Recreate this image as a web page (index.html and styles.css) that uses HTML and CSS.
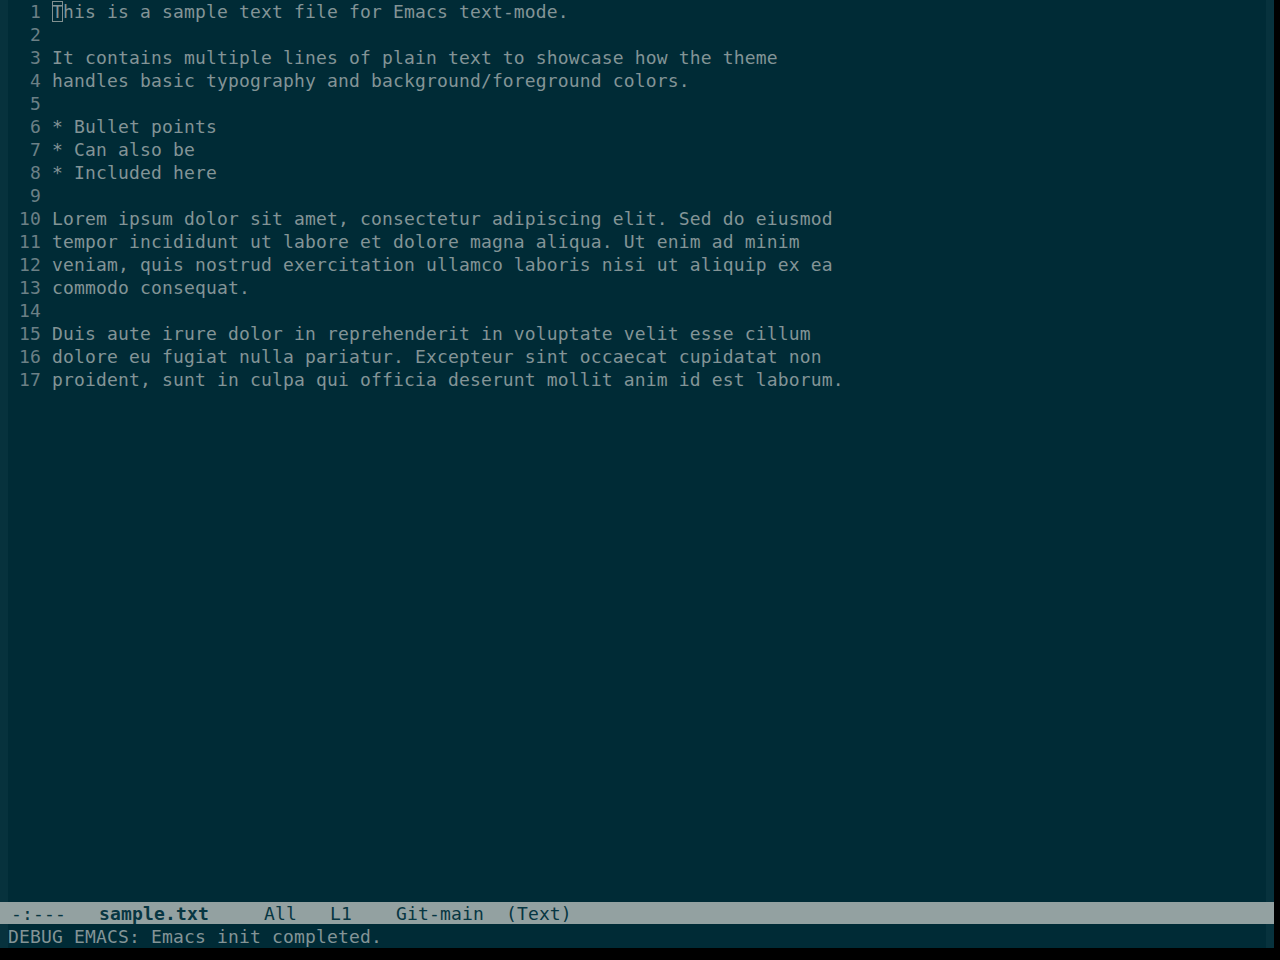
FILE: index.html
```html
<!DOCTYPE html>
<html>
<head>
<meta charset="utf-8">
<link rel="stylesheet" href="styles.css">
</head>
<body>
<div class="frame">
  <div class="window">
    <div class="fringe"></div>
    <div class="text-area">
      <div class="row"><span class="ln">  1 </span><span class="cursor">T</span>his is a sample text file for Emacs text-mode.</div>
      <div class="row"><span class="ln">  2 </span></div>
      <div class="row"><span class="ln">  3 </span>It contains multiple lines of plain text to showcase how the theme</div>
      <div class="row"><span class="ln">  4 </span>handles basic typography and background/foreground colors.</div>
      <div class="row"><span class="ln">  5 </span></div>
      <div class="row"><span class="ln">  6 </span>* Bullet points</div>
      <div class="row"><span class="ln">  7 </span>* Can also be</div>
      <div class="row"><span class="ln">  8 </span>* Included here</div>
      <div class="row"><span class="ln">  9 </span></div>
      <div class="row"><span class="ln"> 10 </span>Lorem ipsum dolor sit amet, consectetur adipiscing elit. Sed do eiusmod</div>
      <div class="row"><span class="ln"> 11 </span>tempor incididunt ut labore et dolore magna aliqua. Ut enim ad minim</div>
      <div class="row"><span class="ln"> 12 </span>veniam, quis nostrud exercitation ullamco laboris nisi ut aliquip ex ea</div>
      <div class="row"><span class="ln"> 13 </span>commodo consequat.</div>
      <div class="row"><span class="ln"> 14 </span></div>
      <div class="row"><span class="ln"> 15 </span>Duis aute irure dolor in reprehenderit in voluptate velit esse cillum</div>
      <div class="row"><span class="ln"> 16 </span>dolore eu fugiat nulla pariatur. Excepteur sint occaecat cupidatat non</div>
      <div class="row"><span class="ln"> 17 </span>proident, sunt in culpa qui officia deserunt mollit anim id est laborum.</div>
    </div>
    <div class="fringe"></div>
  </div>
  <div class="mode-line"> -:---   <span class="buf">sample.txt</span>     All   L1    Git-main  (Text)</div>
  <div class="echo">
    <div class="fringe"></div>
    <div class="echo-text">DEBUG EMACS: Emacs init completed.</div>
    <div class="fringe"></div>
  </div>
</div>
</body>
</html>
```
FILE: styles.css
```css
html, body {
  margin: 0;
  padding: 0;
  background: #000000;
}
.frame {
  width: 1274px;
  height: 948px;
  display: flex;
  flex-direction: column;
  font-family: "DejaVu Sans Mono", monospace;
  font-size: 18px;
  letter-spacing: 0.16px;
  color: #839496;
}
.window {
  height: 902px;
  display: flex;
  background: #002b36;
}
.fringe {
  width: 8px;
  flex: none;
  background: #07323d;
}
.text-area {
  flex: 1;
  overflow: hidden;
}
.row {
  box-sizing: border-box;
  height: 23px;
  padding-top: 1px;
  line-height: 21px;
  white-space: pre;
}
.ln {
  color: #6c8086;
}
.cursor {
  box-shadow: inset 0 0 0 1px #819090;
}
.mode-line {
  box-sizing: border-box;
  height: 22px;
  padding-top: 1px;
  line-height: 21px;
  background: #93a1a1;
  color: #073642;
  white-space: pre;
}
.buf {
  font-weight: bold;
}
.echo {
  height: 24px;
  display: flex;
  background: #002b36;
}
.echo-text {
  flex: 1;
  padding-top: 2px;
  line-height: 21px;
  white-space: pre;
}
```
